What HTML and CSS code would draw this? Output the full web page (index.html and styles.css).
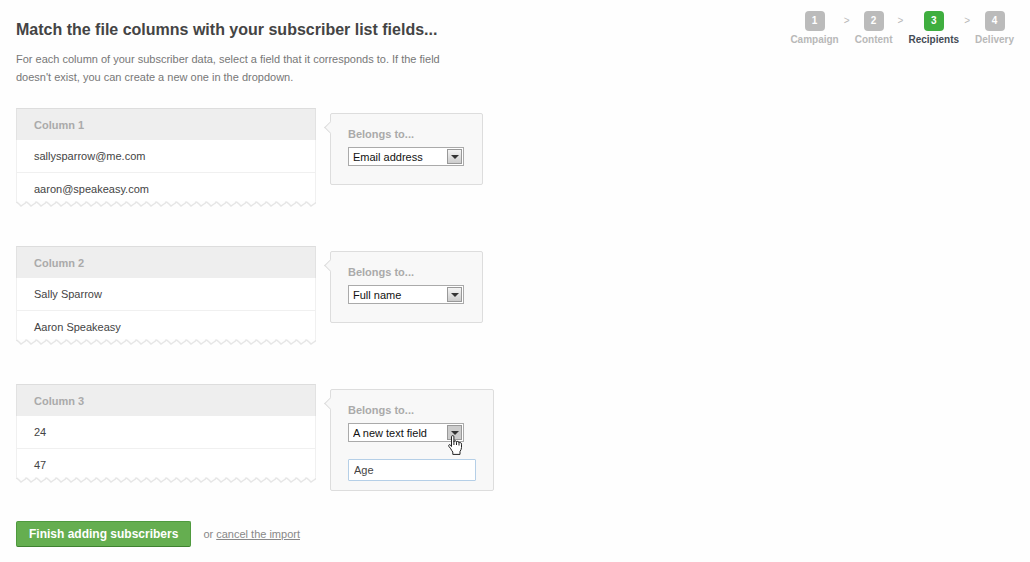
FILE: index.html
```html
<!DOCTYPE html>
<html lang="en">
<head>
  <meta charset="UTF-8">
  <meta name="viewport" content="width=device-width, initial-scale=1.0">
  <title>Match columns</title>
  <link rel="stylesheet" href="styles.css">
</head>
<body>

  <header>
    <div class="intro">
      <h1>Match the file columns with your subscriber list fields...</h1>
      <p>For each column of your subscriber data, select a field that it corresponds to. If the field doesn't exist, you can create a new one in the dropdown.</p>
    </div>
    <ol class="steps">
      <li><span class="num">1</span>Campaign</li>
      <li class="sep">&gt;</li>
      <li><span class="num">2</span>Content</li>
      <li class="sep">&gt;</li>
      <li class="current"><span class="num">3</span>Recipients</li>
      <li class="sep">&gt;</li>
      <li><span class="num">4</span>Delivery</li>
    </ol>
  </header>

  <form>
    <section class="match">
      <div class="column">
        <table>
          <thead><tr><th>Column 1</th></tr></thead>
          <tbody>
            <tr><td>sallysparrow@me.com</td></tr>
            <tr><td>aaron@speakeasy.com</td></tr>
          </tbody>
        </table>
        <svg class="torn" width="100%" height="6" aria-hidden="true">
          <defs>
            <pattern id="zigzag" width="10" height="6" patternUnits="userSpaceOnUse">
              <rect width="10" height="6" fill="#fefefe"/>
              <path d="M-5 5 Q-3 5 -2 3 T0 1 T3 3 T5 5 T8 3 T10 1 T13 3" fill="none" stroke="#e6e6e6" stroke-width="1.4"/>
            </pattern>
          </defs>
          <rect width="100%" height="6" fill="url(#zigzag)"/>
        </svg>
      </div>
      <div class="belongs">
        <label for="field1">Belongs to...</label>
        <div class="select">
          <select id="field1"><option>Email address</option><option>Full name</option><option>A new text field</option></select>
          <span class="arrow"></span>
        </div>
      </div>
    </section>

    <section class="match">
      <div class="column">
        <table>
          <thead><tr><th>Column 2</th></tr></thead>
          <tbody>
            <tr><td>Sally Sparrow</td></tr>
            <tr><td>Aaron Speakeasy</td></tr>
          </tbody>
        </table>
        <svg class="torn" width="100%" height="6" aria-hidden="true">
          <rect width="100%" height="6" fill="url(#zigzag)"/>
        </svg>
      </div>
      <div class="belongs">
        <label for="field2">Belongs to...</label>
        <div class="select">
          <select id="field2"><option>Email address</option><option selected>Full name</option><option>A new text field</option></select>
          <span class="arrow"></span>
        </div>
      </div>
    </section>

    <section class="match">
      <div class="column">
        <table>
          <thead><tr><th>Column 3</th></tr></thead>
          <tbody>
            <tr><td>24</td></tr>
            <tr><td>47</td></tr>
          </tbody>
        </table>
        <svg class="torn" width="100%" height="6" aria-hidden="true">
          <rect width="100%" height="6" fill="url(#zigzag)"/>
        </svg>
      </div>
      <div class="belongs new-field">
        <label for="field3">Belongs to...</label>
        <div class="select">
          <select id="field3"><option>Email address</option><option>Full name</option><option selected>A new text field</option></select>
          <span class="arrow hover"></span>
          <svg class="pointer" width="15" height="20" viewBox="0 0 15 20" aria-hidden="true">
            <path d="M3.5 11.5 V1.8 Q3.5 .6 4.7 .6 Q5.9 .6 5.9 1.8 V7 Q6 5.6 7.2 5.7 Q8.4 5.8 8.5 7.2 Q8.8 6.2 9.8 6.4 Q11 6.6 11 8 Q11.4 7.2 12.3 7.5 Q13.5 7.8 13.5 9.2 V12.5 Q13.4 14.5 12 16.5 V19.4 H4.8 V17 Q3.6 15.6 2.8 13.8 L.9 11.4 Q.3 10.2 1.3 9.6 Q2.2 9.3 3.5 11.5 Z M5.9 7 V10 M8.5 7.2 V10 M11 8 V10.5" fill="#fff" stroke="#222" stroke-linejoin="round"/>
          </svg>
        </div>
        <input type="text" value="Age" aria-label="New field name">
      </div>
    </section>

    <div class="actions">
      <button type="submit">Finish adding subscribers</button>
      <span>or <a href="#">cancel the import</a></span>
    </div>
  </form>

</body>
</html>
```
FILE: styles.css
```css
* {
  box-sizing: border-box;
}

body {
  margin: 0;
  padding: 11px 16px;
  font-family: "Liberation Sans", Arial, sans-serif;
  font-size: 11px;
  color: #444;
  background: #fefefe;
}

header {
  display: flex;
  justify-content: space-between;
  align-items: flex-start;
}

h1 {
  margin: 9px 0 10px;
  font-size: 16px;
  line-height: 20px;
  color: #444;
}

.intro p {
  max-width: 440px;
  margin: 0 0 22px;
  line-height: 18px;
  color: #777;
}

.steps {
  display: flex;
  margin: 0;
  padding: 0;
  list-style: none;
  font-size: 10px;
  font-weight: bold;
  line-height: 16px;
  color: #b8b8b8;
}

.steps li {
  display: flex;
  flex-direction: column;
  align-items: center;
  gap: 1px;
}

.steps .num {
  width: 20px;
  height: 20px;
  border-radius: 4px;
  background: #bbb;
  color: #fff;
  line-height: 20px;
  text-align: center;
}

.steps .sep {
  width: 16px;
  line-height: 20px;
  font-weight: normal;
}

.steps .current {
  color: #444b55;
}

.steps .current .num {
  background: #3fae3f;
}

.match {
  display: flex;
  align-items: flex-start;
  gap: 14px;
  height: 102px;
  margin-bottom: 36px;
}

.column {
  width: 300px;
}

table {
  width: 100%;
  border-collapse: separate;
  border-spacing: 0;
}

th,
td {
  height: 32px;
  padding: 0 17px;
  text-align: left;
  border: 1px solid #f0f0f0;
  border-width: 0 1px;
}

th {
  background: #eee;
  border-color: #e2e2e2;
  border-top: 1px solid #ddd;
  color: #aaa;
}

td {
  background: #fff;
}

tr + tr td {
  border-top-width: 1px;
}

.torn {
  display: block;
  margin-top: -3px;
}

.belongs {
  position: relative;
  width: 153px;
  height: 72px;
  margin-top: 5px;
  padding: 13px 17px;
  border: 1px solid #ddd;
  border-radius: 2px;
  background: #f8f8f8;
}

/* little notch pointing at the column */
.belongs::before {
  content: "";
  position: absolute;
  left: -5px;
  top: 9px;
  width: 8px;
  height: 8px;
  border: 1px solid #ddd;
  border-width: 0 0 1px 1px;
  background: #f8f8f8;
  transform: rotate(45deg);
}

.belongs label {
  display: block;
  margin-bottom: 6px;
  line-height: 14px;
  font-weight: bold;
  color: #aaa;
}

.new-field {
  width: 164px;
  height: 102px;
}

.select {
  position: relative;
  width: 116px;
}

select {
  display: block;
  width: 100%;
  height: 19px;
  padding: 0 20px 0 4px;
  border: 1px solid #aaa;
  border-radius: 0;
  background: #fff;
  appearance: none;
  font: 11px "Liberation Sans", Arial, sans-serif;
  color: #111;
}

.arrow {
  position: absolute;
  top: 2px;
  right: 2px;
  width: 15px;
  height: 15px;
  border: 1px solid #999;
  background: linear-gradient(#f4f4f4, #ccc);
  pointer-events: none;
}

.arrow::after {
  content: "";
  position: absolute;
  left: 3px;
  top: 5px;
  border: 4px solid transparent;
  border-width: 4px 4px 0;
  border-top-color: #333;
}

.arrow.hover {
  background: #ccc;
}

.pointer {
  position: absolute;
  top: 12px;
  right: 1px;
  z-index: 1;
}

input {
  display: block;
  width: 128px;
  height: 22px;
  margin-top: 17px;
  padding: 0 5px;
  border: 1px solid #b5cfe7;
  border-radius: 1px;
  background: #fff;
  font: 11px "Liberation Sans", Arial, sans-serif;
  color: #444;
}

.actions {
  display: flex;
  align-items: center;
  gap: 12px;
  margin-top: -1px;
  color: #888;
}

button {
  height: 26px;
  padding: 0 12px;
  border: 1px solid #4f9a3e;
  border-bottom-color: #3f8130;
  border-radius: 2px;
  background: #65ae50;
  font: bold 12px "Liberation Sans", Arial, sans-serif;
  color: #fff;
}

a {
  color: #888;
}
```
